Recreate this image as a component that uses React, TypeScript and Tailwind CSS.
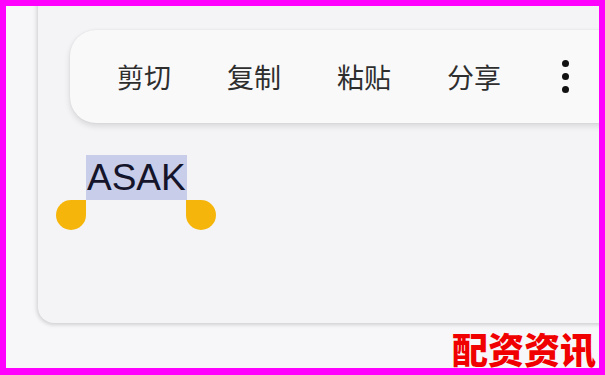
import React from "react";

export default function App() {
  const items = ["剪切", "复制", "粘贴", "分享"];
  return (
    <div className="relative w-[605px] h-[375px] bg-[#ff00ff] pt-[6px] pl-[6px] pr-[6px] pb-[7px]">
      <div className="w-full h-full bg-[#f7f7f9] overflow-hidden pl-[32px]">
        <div className="mt-[-30px] h-[347px] w-[620px] bg-[#f4f4f7] rounded-[16px] shadow-[0_2px_4px_rgba(0,0,0,0.12),-2px_0_5px_rgba(0,0,0,0.08)] pt-[54px] pl-[32px]">
          <div
            className="h-[93px] w-[600px] bg-[#f9f9fa] rounded-[26px] shadow-[0_3px_6px_rgba(0,0,0,0.12),0_0_2px_rgba(0,0,0,0.08)] flex items-center pl-[47px] gap-[54px]"
            style={{ fontFamily: '"Noto Sans CJK SC", "Noto Sans", sans-serif' }}
          >
            {items.map((t) => (
              <span key={t} className="text-[27px] leading-none text-[#2e2e2e] w-[56px]">
                {t}
              </span>
            ))}
            <div className="flex flex-col items-center gap-[6px] ml-[5px]">
              <span className="block w-[7px] h-[7px] rounded-full bg-[#111]" />
              <span className="block w-[7px] h-[7px] rounded-full bg-[#111]" />
              <span className="block w-[7px] h-[7px] rounded-full bg-[#111]" />
            </div>
          </div>
          <div className="mt-[32px] ml-[16px] flex flex-col items-start">
            <span
              className="bg-[#c8cdea] text-[#14142a] text-[37px] leading-[45px] px-[1px]"
              style={{ fontFamily: '"Liberation Sans", Arial, sans-serif' }}
            >
              ASAK
            </span>
            <div className="flex ml-[-30px]">
              <div className="w-[30px] h-[30px] bg-[#f5b50a] rounded-full rounded-tr-none" />
              <div className="w-[100px]" />
              <div className="w-[30px] h-[30px] bg-[#f5b50a] rounded-full rounded-tl-none" />
            </div>
          </div>
        </div>
      </div>
      <div
        className="absolute right-[9px] top-[328px] text-[36px] leading-[40px] font-black text-[#f00000] whitespace-nowrap"
        style={{ fontFamily: '"Noto Sans CJK SC", sans-serif' }}
      >
        配资资讯
      </div>
    </div>
  );
}
